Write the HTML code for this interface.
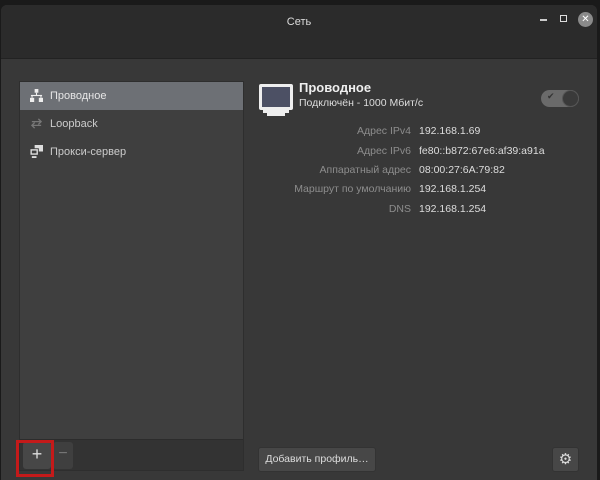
<!DOCTYPE html>
<html><head><meta charset="utf-8"><style>
*{margin:0;padding:0;box-sizing:border-box}
body{width:600px;height:480px;background:#1a1a1a;font-family:"Liberation Sans","DejaVu Sans",sans-serif;overflow:hidden;position:relative}
.win{position:absolute;left:1px;top:5px;width:596px;height:475px;background:#383838;border-radius:6px 6px 0 0;overflow:hidden}
.hdr{position:absolute;left:0;top:0;width:596px;height:54px;background:#2b2b2b;border-bottom:1px solid #222}
.title{position:absolute;left:0;right:0;top:11px;text-align:center;color:#ddd;font-size:11px}
.side{position:absolute;left:18px;top:76px;width:225px;height:390px;background:#3f3f3f;border:1px solid #2e2e2e}
.row{position:absolute;left:0;width:223px;height:28px;color:#ccc;font-size:11px;line-height:28px;padding-left:30px}
.sel{background:#6d7075;color:#e6e6e6}
.tb{position:absolute;left:0;bottom:0;width:223px;height:31px;background:#333;border-top:1px solid #2c2c2c}
.ic{position:absolute;left:10px;top:7px}
.lab{position:absolute;width:160px;text-align:right;color:#8d8d8d;font-size:10.5px}
.val{position:absolute;left:418px;color:#ddd;font-size:10.5px}
.btn{position:absolute;background:#474747;border:1px solid #333;border-radius:3px;color:#ddd;font-size:11px;text-align:center}
</style></head><body>
<div class="win">
<div class="hdr"><div class="title">Сеть</div>
<div style="position:absolute;left:539px;top:14px;width:7px;height:2px;background:#ccc"></div>
<div style="position:absolute;left:559px;top:10px;width:7px;height:7px;border:1.5px solid #ddd"></div>
<div style="position:absolute;left:577px;top:7px;width:15px;height:15px;border-radius:50%;background:#8a8a8a;color:#fff;font-size:10px;font-weight:bold;text-align:center;line-height:15px">✕</div>
</div>
<div class="side">
<div class="row sel" style="top:0">
<svg class="ic" width="13" height="13" viewBox="0 0 14 14" fill="#eee"><rect x="5" y="0" width="4" height="4"/><rect x="6.4" y="4" width="1.2" height="3"/><rect x="1" y="6.4" width="12" height="1.2"/><rect x="1.6" y="6.4" width="1.2" height="3"/><rect x="11.2" y="6.4" width="1.2" height="3"/><rect x="0" y="9.5" width="4.5" height="4.5"/><rect x="9.5" y="9.5" width="4.5" height="4.5"/></svg>Проводное</div>
<div class="row" style="top:28px">
<svg class="ic" width="13" height="13" viewBox="0 0 14 14" fill="none" stroke="#777" stroke-width="1.4"><path d="M2 5h10M9 2l3 3-3 3M12 9H2M5 6l-3 3 3 3"/></svg>Loopback</div>
<div class="row" style="top:56px">
<svg class="ic" width="13" height="13" viewBox="0 0 14 14" fill="#ddd"><rect x="5" y="0" width="9" height="7"/><rect x="0" y="4" width="9" height="7" stroke="#3f3f3f" stroke-width="1"/><rect x="2" y="6" width="5" height="3" fill="#3f3f3f"/><rect x="2" y="12" width="5" height="2"/></svg>Прокси-сервер</div>
<div class="tb">
<div class="btn" style="left:3px;top:2px;width:28px;height:27px;font-size:18px;line-height:24px;border:none">+</div>
<div class="btn" style="left:33px;top:2px;width:20px;height:27px;font-size:16px;line-height:24px;background:#3f3f3f;color:#777;border:none">−</div>
</div>
</div>
<div style="position:absolute;left:15px;top:435px;width:38px;height:37px;border:3px solid #c41a1a"></div>
<div style="position:absolute;left:258px;top:79px;width:34px;height:26px;background:#eee;border-radius:2px"></div>
<div style="position:absolute;left:261px;top:82px;width:28px;height:20px;background:#4c5064"></div>
<div style="position:absolute;left:262px;top:104px;width:26px;height:4px;background:#eee"></div>
<div style="position:absolute;left:266px;top:107px;width:18px;height:4px;background:#eee"></div>
<div style="position:absolute;left:298px;top:75px;color:#eee;font-size:13px;font-weight:bold">Проводное</div>
<div style="position:absolute;left:298px;top:92px;color:#ddd;font-size:10.5px">Подключён - 1000 Мбит/с</div>
<div style="position:absolute;left:540px;top:85px;width:38px;height:17px;border-radius:9px;background:#6a6a6a"></div>
<div style="position:absolute;left:546px;top:86px;color:#333;font-size:9px">✔</div>
<div style="position:absolute;left:561px;top:85px;width:17px;height:17px;border-radius:50%;background:#3a3a3a;border:1px solid #555"></div>
<div class="lab" style="left:250px;top:120px">Адрес IPv4</div><div class="val" style="top:120px">192.168.1.69</div>
<div class="lab" style="left:250px;top:140px">Адрес IPv6</div><div class="val" style="top:140px">fe80::b872:67e6:af39:a91a</div>
<div class="lab" style="left:250px;top:159px">Аппаратный адрес</div><div class="val" style="top:159px">08:00:27:6A:79:82</div>
<div class="lab" style="left:250px;top:178px">Маршрут по умолчанию</div><div class="val" style="top:178px">192.168.1.254</div>
<div class="lab" style="left:250px;top:198px">DNS</div><div class="val" style="top:198px">192.168.1.254</div>
<div class="btn" style="left:257px;top:442px;width:118px;height:25px;line-height:23px;font-size:10.5px">Добавить профиль…</div>
<div class="btn" style="left:551px;top:442px;width:27px;height:25px;line-height:23px;font-size:15px">⚙</div>
</div>
</body></html>
